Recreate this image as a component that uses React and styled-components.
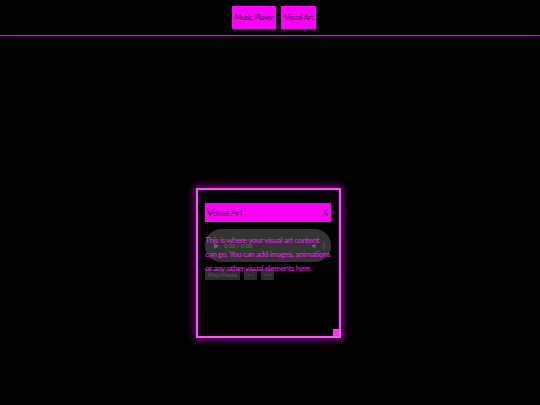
import React from "react";
import styled, { createGlobalStyle } from "styled-components";

const Global = createGlobalStyle`
  html, body {
    margin: 0;
    padding: 0;
    background: #000;
    width: 540px;
    height: 405px;
    overflow: hidden;
  }
  body {
    font-family: Lato, "Liberation Sans", sans-serif;
  }
`;

const Desktop = styled.div`
  position: relative;
  width: 540px;
  height: 405px;
  background: #000;
`;

const NavBar = styled.nav`
  display: flex;
  justify-content: center;
  gap: 5px;
  padding: 6px 0 6px 8px;
  border-bottom: 1px solid #c21fc2;
  box-shadow: 0 0 3px rgba(255, 0, 255, 0.6);
`;

const NavButton = styled.button`
  height: 23px;
  padding: 0 3px;
  border: none;
  background: #ff00ff;
  color: #3a0a3a;
  font-family: inherit;
  font-size: 7.5px;
  letter-spacing: -0.3px;
  cursor: pointer;
`;

const Window = styled.section`
  position: absolute;
  left: 196px;
  top: 188px;
  width: 145px;
  height: 150px;
  box-sizing: border-box;
  border: 2px solid #ea5cea;
  box-shadow: 0 0 7px 2px rgba(255, 0, 255, 0.5), inset 0 0 3px rgba(255, 0, 255, 0.45);
  background: #000;
  padding: 13px 8px 8px 7px;
  display: flex;
  flex-direction: column;
`;

const TitleBar = styled.header`
  display: flex;
  align-items: center;
  justify-content: space-between;
  height: 19px;
  padding: 0 3px 0 2px;
  background: #ff00ff;
  color: #2a0a2a;
  font-size: 9px;
  letter-spacing: -0.3px;
`;

const CloseMark = styled.span`
  font-size: 9px;
`;

const Body = styled.div`
  display: grid;
  grid-template-columns: minmax(0, 1fr);
  margin-top: 7px;
`;

const Layer = styled.div`
  grid-area: 1 / 1;
  min-width: 0;
`;

const AudioPill = styled.div`
  height: 33px;
  border-radius: 16px;
  background: rgba(70, 70, 70, 0.75);
  display: flex;
  align-items: center;
  padding: 0 6px 0 9px;
  gap: 5px;
  color: #777;
  font-family: "Liberation Sans", sans-serif;
  font-size: 6px;
`;

const Time = styled.span`
  flex: 1;
  color: #6a6a6a;
`;

const ControlRow = styled.div`
  display: flex;
  gap: 4px;
  margin-top: 7px;
`;

const ControlButton = styled.button`
  height: 11px;
  padding: 0 3px;
  border: none;
  background: #2e2e2e;
  color: #5a5a5a;
  font-family: inherit;
  font-size: 6px;
`;

const Message = styled.p`
  margin: 0;
  padding-top: 4px;
  color: #e61ee6;
  font-size: 8.2px;
  line-height: 14px;
  letter-spacing: -0.4px;
  white-space: nowrap;
`;

const Grip = styled.div`
  position: absolute;
  right: 0;
  bottom: 0;
  width: 6px;
  height: 7px;
  background: #ff33ff;
`;

export default function App() {
  return (
    <>
      <Global />
      <Desktop>
        <NavBar>
          <NavButton>Music Player</NavButton>
          <NavButton>Visual Art</NavButton>
        </NavBar>
        <Window>
          <TitleBar>
            <span>Visual Art</span>
            <CloseMark>X</CloseMark>
          </TitleBar>
          <Body>
            <Layer>
              <AudioPill>
                <svg width="5" height="6" viewBox="0 0 5 6">
                  <path d="M0 0 L5 3 L0 6 Z" fill="#666" />
                </svg>
                <Time>0:00 / 0:00</Time>
                <svg width="6" height="6" viewBox="0 0 6 6">
                  <path d="M0 2 H1.5 L3.5 0.5 V5.5 L1.5 4 H0 Z" fill="#666" />
                </svg>
                <svg width="2" height="7" viewBox="0 0 2 7">
                  <circle cx="1" cy="1" r="0.7" fill="#666" />
                  <circle cx="1" cy="3.5" r="0.7" fill="#666" />
                  <circle cx="1" cy="6" r="0.7" fill="#666" />
                </svg>
              </AudioPill>
              <ControlRow>
                <ControlButton>Play/Pause</ControlButton>
                <ControlButton>&lt;&lt;</ControlButton>
                <ControlButton>&gt;&gt;</ControlButton>
              </ControlRow>
            </Layer>
            <Layer>
              <Message>
                This is where your visual art content
                <br />
                can go. You can add images, animations
                <br />
                or any other visual elements here.
              </Message>
            </Layer>
          </Body>
          <Grip />
        </Window>
      </Desktop>
    </>
  );
}
